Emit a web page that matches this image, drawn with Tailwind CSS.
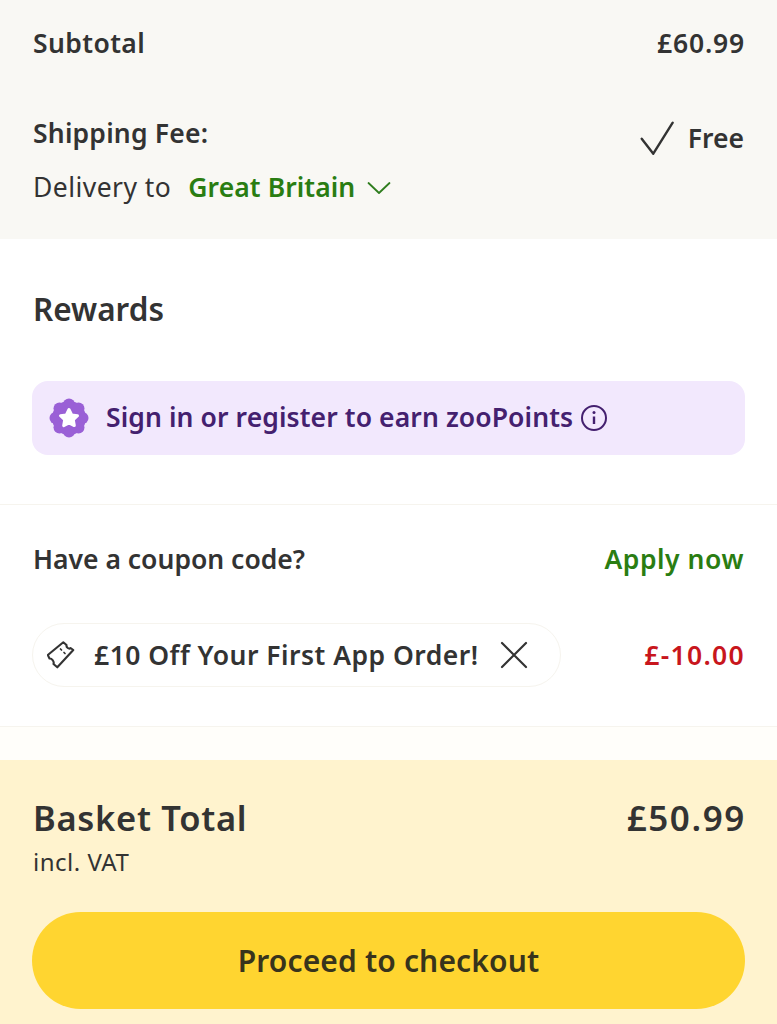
<!DOCTYPE html>
<html><head><meta charset="utf-8"><script src="https://cdn.jsdelivr.net/npm/@tailwindcss/browser@4"></script></head>
<body class="m-0 bg-white">
<div class="w-[777px] h-[1024px] overflow-hidden flex flex-col font-['Noto_Sans',sans-serif] text-[#333333]">
  <section class="h-[239px] bg-[#f9f8f4] px-[33px] pt-[23px] shrink-0">
    <div class="flex justify-between items-center h-[40px]">
      <span class="text-[26.5px] font-semibold leading-[40px] tracking-[0.4px]">Subtotal</span>
      <span class="text-[26.5px] font-semibold leading-[40px] tracking-[0.8px] -mr-px">£60.99</span>
    </div>
    <div class="flex justify-between mt-[50px]">
      <div>
        <div class="text-[26.5px] font-semibold leading-[40px] tracking-[0.2px]">Shipping Fee:</div>
        <div class="flex items-center mt-[14px] h-[40px]">
          <span class="text-[26.5px] leading-[40px] tracking-[0.45px]">Delivery to</span>
          <span class="text-[26.5px] font-semibold leading-[40px] tracking-[0.08px] text-[#2a7d12] ml-[17px]">Great Britain</span>
          <svg class="ml-[12px] mt-[2px]" width="24" height="14" viewBox="0 0 24 14" fill="none" stroke="#2f7d1e" stroke-width="1.8" stroke-linecap="round" stroke-linejoin="round"><path d="M1.500 2 L12 12 L22.500 2"/></svg>
        </div>
      </div>
      <div class="flex items-center h-[48px] mt-[2px]">
        <svg width="36" height="36" viewBox="0 0 36 36" fill="none" stroke="#333" stroke-width="2.400" stroke-linecap="round" stroke-linejoin="round"><path d="M1.700 17.700 L13.300 32.700 L32.700 1.700"/></svg>
        <span class="text-[26.5px] font-semibold ml-[12px]">Free</span>
      </div>
    </div>
  </section>
  <section class="h-[266px] shrink-0 border-b border-[#f6f4ee] px-[33px] pt-[49px]">
    <h2 class="text-[31.5px] font-semibold leading-[42px]">Rewards</h2>
    <div class="mt-[51px] -ml-px w-[713px] h-[74px] rounded-[16px] bg-[#f2e8fd] flex items-center pl-[17px]">
      <svg width="40" height="40" viewBox="0 0 40 40"><g fill="#9a60d6"><circle cx="20" cy="20" r="17"/><circle cx="20" cy="6.500" r="6"/><circle cx="20" cy="33.500" r="6"/><circle cx="6.500" cy="20" r="6"/><circle cx="33.500" cy="20" r="6"/><circle cx="10.500" cy="10.500" r="6"/><circle cx="29.500" cy="10.500" r="6"/><circle cx="10.500" cy="29.500" r="6"/><circle cx="29.500" cy="29.500" r="6"/></g><path fill="#fff" stroke="#fff" stroke-width="3" stroke-linejoin="round" d="M20 11.500 L22.700 16.900 L28.500 17.700 L24.300 21.800 L25.300 27.600 L20 24.800 L14.700 27.600 L15.700 21.800 L11.500 17.700 L17.300 16.900 Z"/></svg>
      <span class="text-[26.5px] font-semibold tracking-[0.1px] text-[#44206f] ml-[17px] -mt-[2px] leading-[40px] whitespace-nowrap">Sign in or register to earn zooPoints</span>
      <svg class="ml-[7px]" width="28" height="28" viewBox="0 0 28 28" fill="none" stroke="#44206f"><circle cx="14" cy="14" r="12" stroke-width="2"/><path d="M14 12.500 V20" stroke-width="2.400"/><circle cx="14" cy="8.500" r="1.500" fill="#44206f" stroke="none"/></svg>
    </div>
  </section>
  <section class="h-[222px] shrink-0 border-b border-[#f6f4ee] px-[33px] pt-[34px]">
    <div class="flex justify-between items-center h-[40px]">
      <span class="text-[26.5px] font-semibold leading-[40px]">Have a coupon code?</span>
      <span class="text-[26.5px] font-semibold leading-[40px] tracking-[0.55px] text-[#2a7d12]">Apply now</span>
    </div>
    <div class="flex justify-between items-center mt-[44px]">
      <div class="-ml-px w-[529px] h-[64px] rounded-full border border-[#f6f4ee] flex items-center pl-[14px]">
        <svg width="30" height="30" viewBox="0 0 30 30" fill="none" stroke="#333" stroke-width="2.100" stroke-linejoin="round" stroke-linecap="round"><path d="M16.300 2.300 L19.500 5 C19 7.500 22 9.500 23.500 8 L26.300 10 L10.300 27.300 L6.500 24 C7.500 21.500 4.500 18 2.500 18.500 L0.800 15 Z"/><path d="M13.500 9 L14.500 10 M17 12.500 L18 13.500" stroke-width="1.700"/></svg>
        <span class="text-[26.5px] font-semibold tracking-[0.48px] ml-[17px] leading-[40px] whitespace-nowrap">£10 Off Your First App Order!</span>
        <svg class="ml-[21px]" width="28" height="28" viewBox="0 0 28 28" fill="none" stroke="#333" stroke-width="2.200" stroke-linecap="round"><path d="M2 2 L26 26 M26 2 L2 26"/></svg>
      </div>
      <span class="text-[26.5px] font-semibold tracking-[1.3px] text-[#c8161d] leading-[40px] -mr-px">£-10.00</span>
    </div>
  </section>
  <div class="h-[33px] shrink-0 bg-[#fffefa]"></div>
  <section class="flex-1 bg-[#fff3ce] px-[33px] pt-[36px]">
    <div class="flex justify-between items-center h-[44px]">
      <span class="text-[34.5px] font-semibold leading-[44px] tracking-[0.7px]">Basket Total</span>
      <span class="text-[35px] font-semibold leading-[44px] tracking-[1.6px] -mr-[2px]">£50.99</span>
    </div>
    <div class="text-[24px] leading-[32px] mt-[6px] tracking-[0.5px]">incl. VAT</div>
    <button class="-ml-px mt-[34px] w-[713px] h-[97px] rounded-full bg-[#ffd530] text-[30px] font-semibold tracking-[0.15px] text-[#38341c] flex items-center justify-center">Proceed to checkout</button>
  </section>
</div>
</body></html>
